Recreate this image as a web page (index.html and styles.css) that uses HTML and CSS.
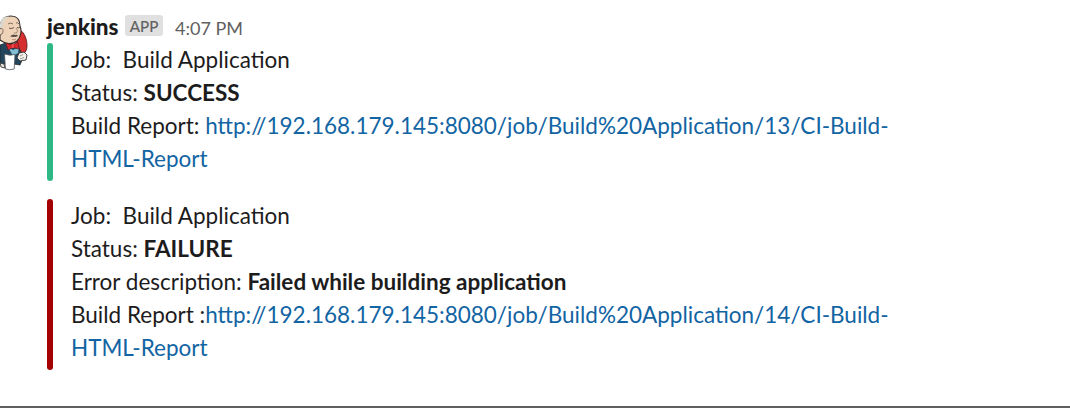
FILE: index.html
```html
<!DOCTYPE html>
<html lang="en">
<head>
<meta charset="utf-8">
<title>jenkins</title>
<link rel="stylesheet" href="styles.css">
</head>
<body>
<main class="message">
  <div class="avatar">
    <svg width="32" height="60" viewBox="0 0 32 60" aria-hidden="true">
      <path d="M20 15C25 18 27 25 27 31C27 35 25 38 23 39L12 37L17 25Z" fill="#d62f2f" stroke="#58201f" stroke-width=".9"/>
      <path d="M0 30L6 28L18 31L21 37L22 45L20 50L14 49L0 49Z" fill="#24465c" stroke="#20252a" stroke-width=".8"/>
      <path d="M8 32L13 35L19 32L18 38L13 41Z" fill="#83bdd2"/>
      <path d="M0 11C1 4 5 1 11 1C18 1 20 6 20 11C22 15 21 22 17 26C12 30 5 29 0 25Z" fill="#efd3b8" stroke="#332d2b" stroke-width="1.1"/>
      <path d="M0 9C1 3 5 1 9 1.5L5 5C3 8 4 10 2 14L0 13Z" fill="#dbd8ce"/>
      <path d="M0 14C3 12 4 16 2 19L0 20" fill="#efd3b8" stroke="#66544a" stroke-width=".8"/>
      <path d="M8 9Q10 7 13 9M16 8Q18 7 19 9" fill="none" stroke="#5f5046" stroke-width=".8"/>
      <path d="M9 13Q11 14.5 14 12.5M17 12.5Q18.5 13.5 20 12" fill="none" stroke="#55463c" stroke-width=".9"/>
      <path d="M16 13Q19 16 16.5 18L14 18" fill="none" stroke="#83695a" stroke-width=".7"/>
      <path d="M10 21.5Q13 18.5 15 20Q17 19 18 21Q15 22.5 10 21.5Z" fill="#574a43"/>
      <path d="M12 24.5Q14 25.5 16 24" fill="none" stroke="#a77869" stroke-width=".8"/>
      <path d="M6 28L12 30L18 27L19 34L13 32.5L8 35Z" fill="#d7272d" stroke="#6b2023" stroke-width=".8"/>
      <path d="M11.5 29L14 29L14 33L11.5 33Z" fill="#ee4448"/>
      <path d="M19 38L24 37L27 40L26 45L20 46L17 43Z" fill="#f2eee8" stroke="#343638" stroke-width=".9"/>
      <path d="M20 41L23 39.5M20 44L24 42.5" stroke="#777" stroke-width=".7"/>
      <path d="M4.5 39Q9 41 15 39.5L14.2 54Q9 55.5 5.5 54Z" fill="#fff" stroke="#50575c" stroke-width=".8"/>
      <path d="M0 48L4 49L5 53L1 52Z" fill="#eee6dc" stroke="#35383b" stroke-width=".9"/>
    </svg>
  </div>
  <div class="content">
    <header class="header"><span class="sender">jenkins</span><span class="badge">APP</span><time class="time">4:07 PM</time></header>
    <section class="attachment success">
      <p>Job:&nbsp; Build Application</p>
      <p>Status: <b>SUCCESS</b></p>
      <p>Build Report: <a>http://192.168.179.145:8080/job/Build%20Application/13/CI-Build-<br>HTML-Report</a></p>
    </section>
    <section class="attachment failure">
      <p>Job:&nbsp; Build Application</p>
      <p>Status: <b>FAILURE</b></p>
      <p>Error description: <b>Failed while building application</b></p>
      <p>Build Report :<a>http://192.168.179.145:8080/job/Build%20Application/14/CI-Build-<br>HTML-Report</a></p>
    </section>
  </div>
</main>
</body>
</html>
```
FILE: styles.css
```css
* { box-sizing: border-box; }
body { margin: 0; background: #fff; color: #1d1c1d; font: 22.5px/33px Lato, sans-serif; }
.message { display: flex; height: 408px; overflow: hidden; border-bottom: 2px solid #616061; }
.avatar { width: 47px; padding-top: 15px; flex: none; }
.avatar svg { display: block; }
.content { padding-top: 10px; white-space: nowrap; }
.header { display: flex; height: 33px; }
.sender { width: 72px; font-weight: 900; }
.badge { width: 38px; height: 21px; margin: 5px 12px 0 6px; border-radius: 3px; background: #e0e0e0; color: #616061; font-size: 15.2px; line-height: 23px; text-align: center; -webkit-text-stroke: .2px #616061; }
.time { color: #616061; font-size: 18px; line-height: 36px; }
.attachment { position: relative; padding: 0 0 6px 24px; margin-bottom: 18px; }
.attachment::before { content: ""; position: absolute; left: 0; top: 0; bottom: 0; width: 6px; border-radius: 3px; background: #2eb886; }
.failure::before { background: #a30200; }
p { margin: 0; }
b { font-weight: 700; }
a { color: #1264a3; }
```
